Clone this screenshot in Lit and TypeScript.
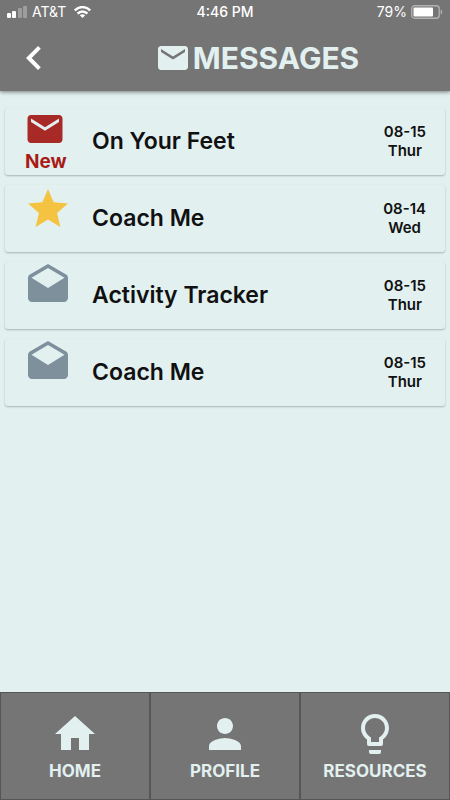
import { LitElement, html, css, svg } from "lit";
import { customElement, property } from "lit/decorators.js";

const ICONS: Record<string, string> = {
  back: "M15.41 7.41L14 6l-6 6 6 6 1.41-1.41L10.83 12z",
  mail: "M20 4H4c-1.1 0-2 .9-2 2v12c0 1.1.9 2 2 2h16c1.1 0 2-.9 2-2V6c0-1.1-.9-2-2-2zm0 4l-8 5-8-5V6l8 5 8-5v2z",
  star: "M12 17.27L18.18 21l-1.64-7.03L22 9.24l-7.19-.61L12 2 9.19 8.63 2 9.24l5.46 4.73L5.82 21z",
  open: "M21.99 8c0-.72-.37-1.35-.94-1.7L12 1 2.95 6.3C2.38 6.65 2 7.28 2 8v10c0 1.1.9 2 2 2h16c1.1 0 2-.9 2-2l-.01-10zM12 13L3.74 7.84 12 3l8.26 4.84L12 13z",
  home: "M10 20v-6h4v6h5v-8h3L12 3 2 12h3v8z",
  person: "M12 12c2.21 0 4-1.79 4-4s-1.79-4-4-4-4 1.79-4 4 1.79 4 4 4zm0 2c-2.67 0-8 1.34-8 4v2h16v-2c0-2.66-5.33-4-8-4z",
  bulb: "M9 21c0 .5.4 1 1 1h4c.6 0 1-.5 1-1v-1H9v1zm3-19C8.1 2 5 5.1 5 9c0 2.4 1.2 4.5 3 5.7V17c0 .5.4 1 1 1h6c.6 0 1-.5 1-1v-2.3c1.8-1.3 3-3.4 3-5.7 0-3.9-3.1-7-7-7zm2.9 11.1l-.9.6V16h-4v-2.3l-.9-.6C7.8 12.2 7 10.6 7 9c0-2.8 2.2-5 5-5s5 2.2 5 5c0 1.6-.8 3.2-2.1 4.1z",
};

@customElement("app-icon")
class AppIcon extends LitElement {
  @property() name = "mail";

  static styles = css`
    :host { display: block; flex: none; width: 48px; height: 48px; }
    .glyph { display: block; width: 100%; height: 100%; fill: currentColor; }
  `;

  render() {
    return html`<svg class="glyph" viewBox="0 0 24 24" aria-hidden="true">
      ${svg`<path d=${ICONS[this.name]}></path>`}
    </svg>`;
  }
}

@customElement("status-bar")
class StatusBar extends LitElement {
  static styles = css`
    :host {
      display: grid;
      grid-template-columns: 1fr auto 1fr;
      align-items: center;
      height: 24px;
      padding: 0 7px;
      color: #fff;
      font-size: 14px;
      line-height: 24px;
    }
    .side { display: flex; align-items: center; gap: 4px; }
    .end { justify-content: flex-end; }
    .wifi { margin-left: 4px; }
    .time { font-weight: 500; }
  `;

  render() {
    return html`
      <div class="side">
        <svg width="21" height="12" viewBox="0 0 21 12" fill="#fff" aria-hidden="true">
          <rect x="0" y="7" width="4" height="5" rx="1"></rect>
          <rect x="5" y="5" width="4" height="7" rx="1"></rect>
          <rect x="11" y="2" width="4" height="10" rx="1" opacity=".3"></rect>
          <rect x="16" y="0" width="4" height="12" rx="1" opacity=".3"></rect>
        </svg>
        <span>AT&amp;T</span>
        <svg class="wifi" width="17" height="12" viewBox="0 0 17 12" aria-hidden="true">
          <g fill="none" stroke="#fff" stroke-width="2.4">
            <path d="M.8 4.500C5-.1 12-.1 16.200 4.500"></path>
            <path d="M3.600 7.600c2.700-2.900 7.100-2.900 9.800 0"></path>
          </g>
          <path d="M5.800 9.300c1.500-1.500 3.900-1.500 5.400 0L8.500 12z" fill="#fff"></path>
        </svg>
      </div>
      <div class="time">4:46 PM</div>
      <div class="side end">
        <span>79%</span>
        <svg width="32" height="14" viewBox="0 0 32 14" aria-hidden="true">
          <rect x=".75" y=".75" width="27.500" height="12.500" rx="3" fill="none" stroke="#fff" stroke-opacity=".45" stroke-width="1.300"></rect>
          <rect x="2.500" y="2.500" width="19.500" height="9" rx="1" fill="#fff"></rect>
          <path d="M29.700 4.500c2 .8 2 4.200 0 5z" fill="#fff" fill-opacity=".45"></path>
        </svg>
      </div>
    `;
  }
}

type Message = { title: string; date: string; day: string; kind: "new" | "star" | "open" };

const MESSAGES: Message[] = [
  { title: "On Your Feet", date: "08-15", day: "Thur", kind: "new" },
  { title: "Coach Me", date: "08-14", day: "Wed", kind: "star" },
  { title: "Activity Tracker", date: "08-15", day: "Thur", kind: "open" },
  { title: "Coach Me", date: "08-15", day: "Thur", kind: "open" },
];

const TABS = [
  { label: "HOME", icon: "home" },
  { label: "PROFILE", icon: "person" },
  { label: "RESOURCES", icon: "bulb" },
];

@customElement("app-root")
class AppRoot extends LitElement {
  static styles = css`
    :host {
      display: flex;
      flex-direction: column;
      min-height: 100vh;
      background: #e2f0f0;
      color: #111;
      font-family: Inter, "Liberation Sans", sans-serif;
    }
    .header {
      background: #757575;
      color: #e2f0f0;
      box-shadow: 0 1px 4px rgba(0, 0, 0, 0.5);
    }
    .bar { display: flex; align-items: center; gap: 6px; height: 67px; padding-left: 10px; }
    .back {
      display: block;
      padding: 0;
      border: 0;
      background: none;
      color: #fff;
      cursor: pointer;
    }
    .heading {
      flex: 1;
      display: flex;
      align-items: center;
      justify-content: center;
      gap: 2px;
      margin: 0;
      font-size: 30px;
      line-height: 36px;
      font-weight: 700;
    }
    .heading-icon { width: 36px; height: 36px; }
    .list {
      flex: 1;
      display: flex;
      flex-direction: column;
      gap: 10px;
      margin: 0;
      padding: 17px 5px;
      list-style: none;
    }
    .card {
      display: flex;
      align-items: center;
      width: 100%;
      height: 67px;
      padding: 0 19px;
      border: 0;
      border-radius: 3px;
      background: #e2f0f0;
      box-shadow: 0 1px 2px rgba(0, 0, 0, 0.25);
      color: inherit;
      font: inherit;
      text-align: left;
      cursor: pointer;
    }
    .mark { align-self: flex-start; width: 68px; }
    .new { color: #a82a26; }
    .new .mark-icon { width: 42px; height: 42px; }
    .star { color: #f5c342; }
    .open { color: #7e909c; }
    .flag {
      display: block;
      padding-left: 1px;
      color: #a81c18;
      font-size: 19px;
      line-height: 24px;
      font-weight: 700;
    }
    .title { flex: 1; padding-bottom: 2px; font-size: 23px; line-height: 30px; font-weight: 600; }
    .when {
      display: flex;
      flex-direction: column;
      align-items: center;
      padding-bottom: 2px;
      font-size: 15px;
      line-height: 19px;
      font-weight: 600;
    }
    .tabs {
      display: grid;
      grid-template-columns: repeat(3, 1fr);
      background: #757575;
    }
    .tab {
      display: flex;
      flex-direction: column;
      align-items: center;
      padding: 17px 0 15px;
      border: 1px solid #565656;
      color: #e2f0f0;
      font-size: 17px;
      line-height: 26px;
      font-weight: 700;
      text-decoration: none;
    }
  `;

  render() {
    return html`
      <header class="header">
        <status-bar></status-bar>
        <div class="bar">
          <button class="back" aria-label="Back"><app-icon name="back"></app-icon></button>
          <h1 class="heading"><app-icon class="heading-icon" name="mail"></app-icon>MESSAGES</h1>
        </div>
      </header>
      <ul class="list">
        ${MESSAGES.map(
          (m) => html`<li>
            <button class="card">
              <span class="mark ${m.kind}">
                <app-icon class="mark-icon" name=${m.kind === "new" ? "mail" : m.kind}></app-icon>
                ${m.kind === "new" ? html`<span class="flag">New</span>` : ""}
              </span>
              <span class="title">${m.title}</span>
              <span class="when"><span>${m.date}</span><span>${m.day}</span></span>
            </button>
          </li>`
        )}
      </ul>
      <nav class="tabs">
        ${TABS.map(
          (t) => html`<a class="tab" href="#${t.icon}"><app-icon name=${t.icon}></app-icon>${t.label}</a>`
        )}
      </nav>
    `;
  }
}
